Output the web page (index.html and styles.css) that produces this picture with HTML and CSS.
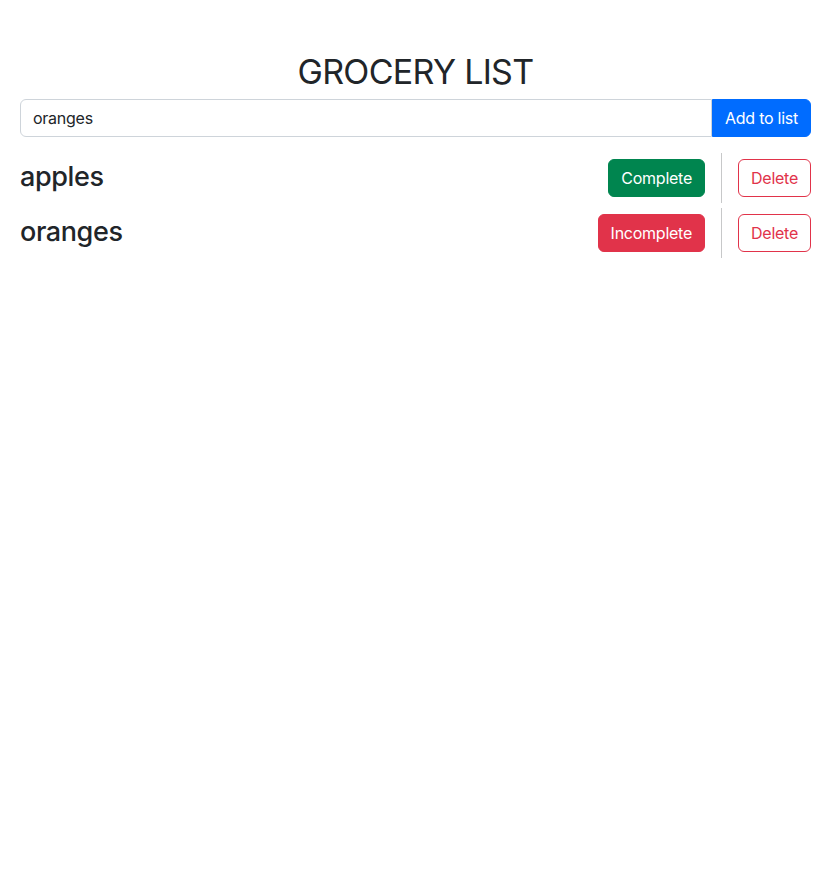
FILE: index.html
```html
<!DOCTYPE html>
<html lang="en">
<head>
<meta charset="utf-8">
<title>Grocery List</title>
<link rel="stylesheet" href="styles.css">
</head>
<body>
<main class="container">
  <h1 class="title">GROCERY LIST</h1>
  <form class="input-group">
    <input class="form-control" type="text" value="oranges">
    <button class="btn btn-primary" type="button">Add to list</button>
  </form>
  <ul class="list">
    <li class="item">
      <span class="item-name">apples</span>
      <div class="actions">
        <button class="btn btn-success" type="button">Complete</button>
        <div class="vr"></div>
        <button class="btn btn-outline-danger" type="button">Delete</button>
      </div>
    </li>
    <li class="item">
      <span class="item-name">oranges</span>
      <div class="actions">
        <button class="btn btn-danger" type="button">Incomplete</button>
        <div class="vr"></div>
        <button class="btn btn-outline-danger" type="button">Delete</button>
      </div>
    </li>
  </ul>
</main>
</body>
</html>
```
FILE: styles.css
```css
* { box-sizing: border-box; }
html, body { margin: 0; padding: 0; background: #fff; }
body {
  font-family: Inter, "Noto Sans", "Liberation Sans", sans-serif;
  font-size: 16px;
  line-height: 1.5;
  letter-spacing: -0.25px;
  color: #212529;
}
.container {
  padding: 51px 20px 0;
}
.title {
  margin: 0 0 6px;
  text-align: center;
  font-size: 34px;
  font-weight: 400;
  line-height: 42px;
  letter-spacing: -0.7px;
}
.input-group {
  display: flex;
  margin: 0;
}
.form-control {
  flex: 1;
  height: 38px;
  padding: 6px 12px;
  font: inherit;
  letter-spacing: inherit;
  color: #212529;
  border: 1px solid #ced4da;
  border-radius: 6px 0 0 6px;
  outline: none;
}
.btn {
  font: inherit;
  letter-spacing: inherit;
  line-height: 24px;
  padding: 6px 12px;
  border: 1px solid transparent;
  border-radius: 6px;
  cursor: pointer;
}
.input-group .btn { border-radius: 0 6px 6px 0; }
.btn-primary { background: #006cff; color: #fff; border-color: #006cff; }
.btn-success { background: #00854f; color: #fff; border-color: #00854f; }
.btn-danger { background: #e1334a; color: #fff; border-color: #e1334a; }
.btn-outline-danger { background: #fff; color: #e1334a; border-color: #e1334a; }
.list {
  list-style: none;
  margin: 16px 0 0;
  padding: 0;
  display: flex;
  flex-direction: column;
  gap: 5px;
}
.item {
  display: flex;
  align-items: center;
  justify-content: space-between;
  height: 50px;
}
.item-name {
  font-size: 27px;
  line-height: 1.2;
  font-weight: 500;
  letter-spacing: -0.4px;
  margin-top: -2px;
}
.actions {
  display: flex;
  align-items: center;
  gap: 16px;
  height: 100%;
}
.vr {
  width: 1px;
  align-self: stretch;
  background: #212529;
  opacity: 0.25;
}
```
